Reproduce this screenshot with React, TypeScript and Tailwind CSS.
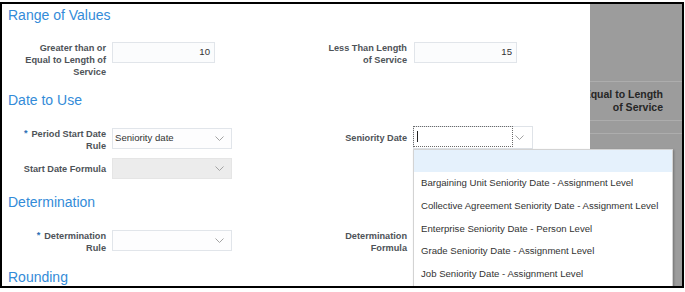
import React from "react";

const Chevron = () => (
  <svg width="9" height="5" viewBox="0 0 9 5" fill="none">
    <path d="M0.5 0.5 L4.5 4.5 L8.5 0.5" stroke="#a3a3a3" strokeWidth="1" />
  </svg>
);

const Heading = ({ children, className = "" }: { children: React.ReactNode; className?: string }) => (
  <div className={"ml-[6px] h-[16px] text-[14px] leading-[16px] text-[#338bd8] " + className}>{children}</div>
);

const Label = ({ children, className = "" }: { children: React.ReactNode; className?: string }) => (
  <div className={"text-right text-[9.2px] leading-[12px] font-bold text-[#4e5358] whitespace-nowrap " + className}>
    {children}
  </div>
);

const Star = () => <span className="relative -top-[1.5px] mr-[4px] text-[#2d6fb6]">*</span>;

const items = [
  "Bargaining Unit Seniority Date - Assignment Level",
  "Collective Agreement Seniority Date - Assignment Level",
  "Enterprise Seniority Date - Person Level",
  "Grade Seniority Date - Assignment Level",
  "Job Seniority Date - Assignment Level",
];

export default function App() {
  return (
    <div className="bg-white w-[685px] h-[292px] pt-[2px]" style={{ fontFamily: '"Liberation Sans", Arial, sans-serif' }}>
      <div className="relative w-[684px] h-[286px] border-2 border-black overflow-hidden flex">
        {/* dialog panel */}
        <div className="relative z-10 w-[588px] h-full bg-white flex flex-col">
          <Heading className="mt-[3px]">Range of Values</Heading>

          {/* Row 1 */}
          <div className="mt-[19px] flex items-start">
            <div className="w-[300px] flex items-start">
              <Label className="w-[104px]">
                Greater than or
                <br />
                Equal to Length of
                <br />
                Service
              </Label>
              <div className="ml-[6px] w-[103px] h-[21px] border border-[#e1e5ea] bg-[#fbfcfd] flex items-center justify-end pr-[4px] text-[9.6px] text-[#333]">
                10
              </div>
            </div>
            <div className="flex items-start">
              <Label className="w-[105px]">
                Less Than Length
                <br />
                of Service
              </Label>
              <div className="ml-[7px] w-[103px] h-[21px] border border-[#e1e5ea] bg-[#fbfcfd] flex items-center justify-end pr-[4px] text-[9.6px] text-[#333]">
                15
              </div>
            </div>
          </div>

          <Heading className="mt-[14px]">Date to Use</Heading>

          {/* Period start date row */}
          <div className="mt-[20px] h-[24px] flex items-start">
            <div className="w-[300px] flex items-start">
              <Label className="w-[104px]">
                <Star />
                Period Start Date
                <br />
                Rule
              </Label>
              <div className="ml-[6px] w-[120px] h-[21px] border border-[#e1e5ea] bg-[#fdfdfe] flex items-center justify-between pl-[2px] pr-[7px] text-[9.6px] text-[#333]">
                <span>Seniority date</span>
                <Chevron />
              </div>
            </div>
            <div className="-mt-[2px] flex items-center">
              <Label className="w-[105px]">Seniority Date</Label>
              <div className="relative ml-[6px] w-[120px] h-[23px] border border-[#dfe3e8] bg-white flex">
                <div className="w-[100px] h-full border border-dotted border-[#6a6a6a] -m-[1px] mr-0 flex items-center pl-[3px]">
                  <div className="w-[1px] h-[11px] bg-[#222]" />
                </div>
                <div className="flex-1 flex items-center justify-end pr-[8px]">
                  <Chevron />
                </div>
                {/* dropdown popup */}
                <div className="absolute left-[-1px] top-[22px] w-[260px] h-[160px] bg-white border border-[#d3d3d3] shadow-[1px_1px_2px_rgba(0,0,0,0.25)] z-20">
                  <div className="h-[22px] bg-[#e5f1fc]" />
                  {items.map((t) => (
                    <div key={t} className="h-[22.7px] flex items-center pl-[7px] text-[9.6px] text-[#333] whitespace-nowrap">
                      {t}
                    </div>
                  ))}
                </div>
              </div>
            </div>
          </div>

          {/* Start date formula */}
          <div className="mt-[6px] flex items-center">
            <div className="w-[300px] flex items-center">
              <Label className="w-[104px]">Start Date Formula</Label>
              <div className="ml-[6px] w-[120px] h-[21px] border border-[#e5e5e5] bg-[#ececec] flex items-center justify-end pr-[7px]">
                <Chevron />
              </div>
            </div>
          </div>

          <Heading className="mt-[15px]">Determination</Heading>

          <div className="mt-[20px] h-[24px] flex items-start">
            <div className="w-[300px] flex items-start">
              <Label className="w-[104px]">
                <Star />
                Determination
                <br />
                Rule
              </Label>
              <div className="ml-[6px] w-[120px] h-[21px] border border-[#e1e5ea] bg-[#fdfdfe] flex items-center justify-end pr-[7px]">
                <Chevron />
              </div>
            </div>
            <div className="flex items-start">
              <Label className="w-[105px]">
                Determination
                <br />
                Formula
              </Label>
            </div>
          </div>

          <Heading className="mt-[15px]">Rounding</Heading>
        </div>

        {/* background page (dimmed) */}
        <div className="flex-1 h-full bg-[#9c9c9c] overflow-hidden flex flex-col">
          <div className="h-[78px] border-b border-[#adadad]" />
          <div className="h-[39px] border-b border-[#adadad] pt-[6px] pr-[19px] flex flex-col items-end text-[10.5px] leading-[13px] font-bold text-[#262626]">
            <div className="flex justify-end w-full whitespace-nowrap">
              <span>Equal to Length</span>
            </div>
            <div className="whitespace-nowrap">of Service</div>
          </div>
          <div className="h-[13px] border-b border-[#adadad]" />
          <div className="flex-1" />
        </div>
      </div>
    </div>
  );
}
